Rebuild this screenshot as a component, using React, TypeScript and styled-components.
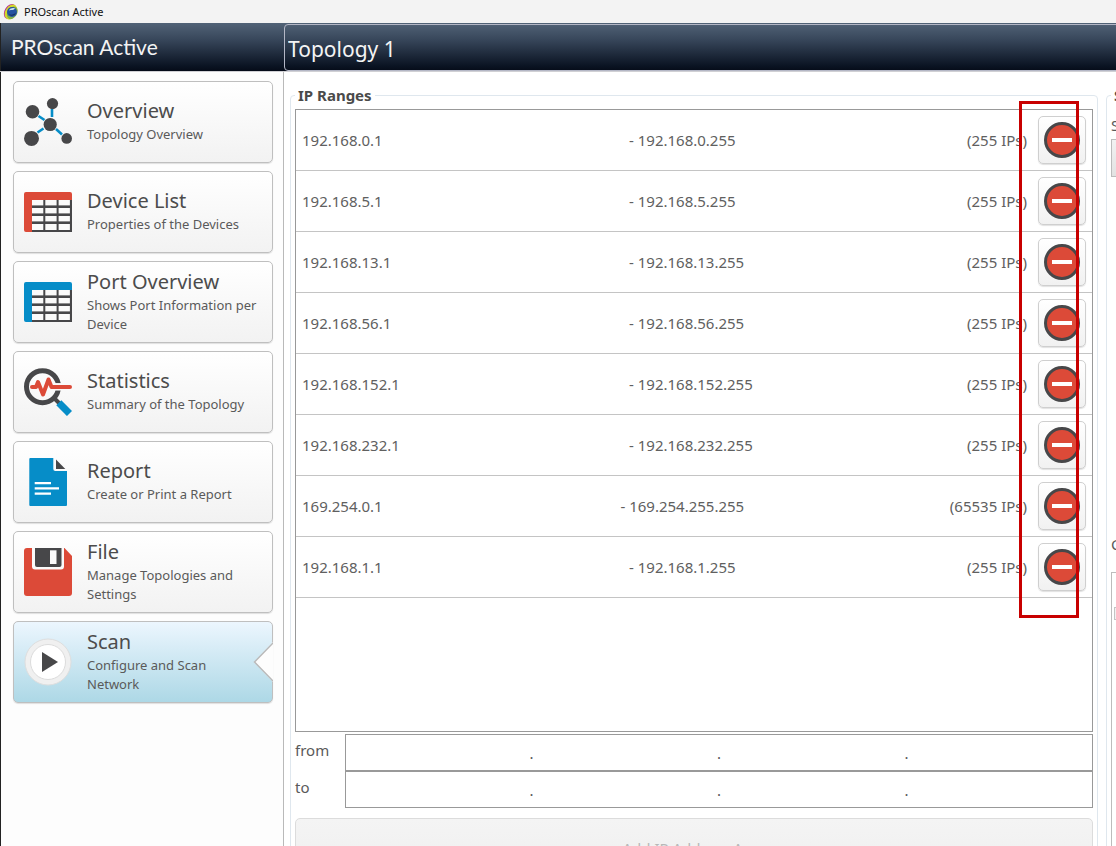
import React from "react";
import styled, { createGlobalStyle, css } from "styled-components";

const DARK = "#474749";
const RED = "#dc4a38";
const BLUE = "#068dc8";

const GlobalStyle = createGlobalStyle`
  * { box-sizing: border-box; }
  html, body { margin: 0; background: #fff; }
  body, button, input {
    font-family: "Noto Sans", "Open Sans", sans-serif;
    color: #555;
  }
`;

const Window = styled.div`
  display: flex;
  flex-direction: column;
  height: 100vh;
  overflow: hidden;
`;

const TitleBar = styled.header`
  display: flex;
  flex: none;
  align-items: center;
  gap: 5px;
  height: 23px;
  padding-left: 3px;
  background: #f3f3f3;
  color: #111;
  font: 11px/16px "Noto Sans", sans-serif;
`;

const HeaderBar = styled.div`
  display: grid;
  flex: none;
  grid-template-columns: 284px minmax(0, 1fr);
  height: 48px;
  border-left: 1px solid #222;
  background: linear-gradient(#526377, #37465a 35%, #0a1322 90%, #050b18);
`;

const AppName = styled.h1`
  margin: 0;
  padding-left: 10px;
  color: #f4f4f4;
  font: 400 21px/48px Lato, sans-serif;
`;

const TopologyName = styled.input`
  width: calc(100% + 8px);
  height: 47px;
  margin-left: -1px;
  margin-top: 1px;
  padding: 2px 4px 0 3px;
  border: 1px solid #b4b7c6;
  border-radius: 4px;
  outline: none;
  background: transparent;
  color: #f4f4f4;
  font-size: 21px;
`;

const Body = styled.div`
  display: grid;
  flex: 1;
  grid-template-columns: 284px minmax(0, 1fr);
  min-height: 0;
  border-top: 1px solid #d0d0d4;
`;

const Sidebar = styled.nav`
  display: flex;
  flex-direction: column;
  gap: 8px;
  padding: 9px 10px 0 12px;
  border-left: 1px solid #222;
  border-right: 1px solid #b9b9b9;
  background: #fdfdfd;
`;

const NavCard = styled.button<{ $active?: boolean }>`
  position: relative;
  display: flex;
  flex: none;
  align-items: center;
  gap: 15px;
  height: 82px;
  padding: 0 14px 0 10px;
  border: 1px solid #bfbfbf;
  border-radius: 5px;
  background: linear-gradient(#fff, #f2f2f2);
  box-shadow: 0 1px 1px rgba(0, 0, 0, 0.12);
  text-align: left;
  ${(p) =>
    p.$active &&
    css`
      background: linear-gradient(#ecf6fe, #add8e6);
    `}
`;

const NavIcon = styled.svg`
  flex: none;
  width: 48px;
  height: 48px;
`;

const NavLabel = styled.span`
  padding-bottom: 3px;
`;

const NavTitle = styled.span`
  display: block;
  color: #4c4c4c;
  font-size: 20px;
  line-height: 28px;
`;

const NavText = styled.span`
  display: block;
  color: #5a5a5a;
  font-size: 13px;
  line-height: 19px;
`;

const Notch = styled.svg`
  position: absolute;
  top: 20px;
  right: -1px;
  width: 20px;
  height: 40px;
`;

const Main = styled.main`
  display: flex;
  gap: 8px;
  min-width: 0;
  padding: 13px 0 0 6px;
  overflow: hidden;
`;

const Group = styled.fieldset`
  flex: 1;
  min-width: 0;
  height: 900px;
  margin: 0;
  padding: 4px 4px 0;
  border: 1px solid #dfe7ee;
  border-radius: 4px;
`;

const SidePane = styled.div`
  flex: 0 0 10px;
  overflow: hidden;

  > fieldset {
    width: 320px;
  }
`;

const Legend = styled.legend`
  padding: 0 3px;
  color: #4a4a4a;
  font-size: 15px;
  font-weight: 700;
  line-height: 20px;
`;

const ListBox = styled.div`
  position: relative;
  height: 623px;
  border: 1px solid #999;
`;

const RangeList = styled.ul`
  margin: 0;
  padding: 0;
  list-style: none;
`;

const RangeRow = styled.li`
  display: grid;
  grid-template-columns: minmax(0, 1fr) minmax(0, 1fr) auto 48px;
  align-items: center;
  height: 61px;
  padding: 0 6px;
  border-bottom: 1px solid #c4c4c4;
  color: #606060;
  font-size: 15px;
  line-height: 20px;
`;

const Count = styled.span`
  margin: 0 11px;
`;

const RemoveButton = styled.button`
  display: grid;
  place-items: center;
  width: 48px;
  height: 48px;
  padding: 0;
  border: 1px solid #cfcfcf;
  border-radius: 5px;
  background: linear-gradient(#fff, #f1f1f1);
  box-shadow: 0 1px 1px rgba(0, 0, 0, 0.12);
`;

const Highlight = styled.div`
  position: absolute;
  top: -9px;
  right: 13px;
  width: 60px;
  height: 517px;
  border: 3px solid #c80000;
  pointer-events: none;
`;

const Addresses = styled.div`
  margin-top: 2px;
`;

const AddressRow = styled.div`
  display: grid;
  grid-template-columns: 50px minmax(0, 1fr);
  height: 37px;
`;

const FieldLabel = styled.label`
  color: #5a5a5a;
  font-size: 15px;
  line-height: 32px;
`;

const AddressBox = styled.div`
  display: grid;
  grid-template-columns: minmax(0, 1fr) auto minmax(0, 1fr) auto minmax(0, 1fr) auto minmax(0, 1fr);
  align-items: center;
  border: 1px solid #999;
  font-size: 15px;
  line-height: 20px;
`;

const Octet = styled.input`
  width: 100%;
  min-width: 0;
  height: 30px;
  padding: 0 4px;
  border: 0;
  outline: none;
  background: transparent;
  font-size: 15px;
  text-align: right;
`;

const AddButton = styled.button`
  display: block;
  width: 100%;
  height: 60px;
  margin-top: 10px;
  border: 1px solid #dcdcdc;
  border-radius: 5px;
  background: linear-gradient(#f4f4f4, #efefef);
  font-size: 15px;

  &:disabled {
    color: #b8b8b8;
  }
`;

const SideLabel = styled.label`
  display: block;
  margin-top: 4px;
  color: #5a5a5a;
  font-size: 15px;
  line-height: 24px;
`;

const SideButton = styled.button`
  display: block;
  width: 100%;
  height: 38px;
  margin-top: 2px;
  margin-bottom: 355px;
  border: 1px solid #bcbcbc;
  background: linear-gradient(#f2f2f2, #e2e2e2);
`;

const SideBox = styled.div`
  height: 320px;
  margin-top: 16px;
  padding: 34px 2px;
  border: 1px solid #bcbcbc;

  > input {
    display: block;
    appearance: none;
    width: 13px;
    height: 13px;
    margin: 0;
    border: 1px solid #c4c4c4;
    background: #f2f2f2;
  }
`;

function OverviewIcon() {
  return (
    <NavIcon viewBox="0 0 48 48" aria-hidden="true">
      <path d="M28 11v8M14.500 18l6 4M13.500 34.500l6-4M32 31l6 5.500" stroke={BLUE} strokeWidth="2.600" fill="none" />
      <g fill={DARK}>
        <circle cx="26.200" cy="26.500" r="6.600" />
        <circle cx="8.500" cy="13.700" r="6.800" />
        <circle cx="28.500" cy="5.600" r="5.600" />
        <circle cx="7.500" cy="40.400" r="7.500" />
        <circle cx="42.700" cy="40.400" r="5.300" />
      </g>
    </NavIcon>
  );
}

function TableIcon({ color }: { color: string }) {
  return (
    <NavIcon viewBox="0 0 48 48" aria-hidden="true">
      <path d="M8 11h40v33H8z" fill={DARK} />
      <path d="M2 4h44a2 2 0 0 1 2 2v6H8v32H2a2 2 0 0 1-2-2V6a2 2 0 0 1 2-2z" fill={color} />
      {[12, 20, 28, 36].map((y) =>
        [8, 21.3, 34.6].map((x) => (
          <rect key={`${x}-${y}`} x={x} y={y} width="11.300" height={y === 36 ? 6 : 5.4} fill="#fafafa" />
        ))
      )}
    </NavIcon>
  );
}

function StatisticsIcon() {
  return (
    <NavIcon viewBox="0 0 48 48" aria-hidden="true">
      <circle cx="18.500" cy="18.700" r="16" fill="none" stroke={DARK} strokeWidth="5" />
      <path d="M29 18.800h19" stroke="#fafafa" strokeWidth="7.500" />
      <path d="M30.500 30.500l5 5" stroke={DARK} strokeWidth="4" />
      <path d="M34.800 34.800l10.700 10.700" stroke={BLUE} strokeWidth="7.200" />
      <path
        d="M8 19h4l2-5 5 12.500 5.500-15L27.500 19H46"
        fill="none"
        stroke={RED}
        strokeWidth="4"
        strokeLinecap="round"
        strokeLinejoin="round"
      />
    </NavIcon>
  );
}

function ReportIcon() {
  return (
    <NavIcon viewBox="0 0 48 48" aria-hidden="true">
      <path d="M6.300 0h23v11a2 2 0 0 0 2 2H43v34a1 1 0 0 1-1 1H6.300a1 1 0 0 1-1-1V1a1 1 0 0 1 1-1z" fill={BLUE} />
      <path d="M32 1.500v9.500h9.300z" fill={DARK} />
      <path d="M10.700 25.200H27M10.700 30.400H35M10.700 35.600H27" stroke="#fff" strokeWidth="2.300" />
    </NavIcon>
  );
}

function FileIcon() {
  return (
    <NavIcon viewBox="0 0 48 48" aria-hidden="true">
      <path d="M3 0h37.500L48 8v37a3 3 0 0 1-3 3H3a3 3 0 0 1-3-3V3a3 3 0 0 1 3-3z" fill={RED} />
      <path d="M8 0h32v18.500a3 3 0 0 1-3 3H11a3 3 0 0 1-3-3z" fill="#fafafa" />
      <path d="M11 0h26.500v17a2 2 0 0 1-2 2H13a2 2 0 0 1-2-2z" fill={DARK} />
      <path d="M26 2.300h6.500v13.700H26z" fill="#fafafa" />
    </NavIcon>
  );
}

function ScanIcon() {
  return (
    <NavIcon viewBox="0 0 48 48" aria-hidden="true">
      <circle cx="24" cy="24" r="23" fill="#f0f0f0" stroke="#dedede" />
      <circle cx="24" cy="24" r="17.500" fill="#fff" stroke="#dcdcdc" />
      <path d="M18 14l16 10-16 10z" fill={DARK} />
    </NavIcon>
  );
}

function AppLogo() {
  return (
    <svg width="16" height="18" viewBox="0 0 16 18" aria-hidden="true">
      <g transform="rotate(32 8 9)">
        <ellipse cx="7" cy="9" rx="5.500" ry="8" fill="#b32a9a" />
        <ellipse cx="8" cy="9" rx="5.600" ry="8" fill="#d3d928" />
        <ellipse cx="9.500" cy="9" rx="4.800" ry="6.800" fill="#7fae4a" />
      </g>
      <circle cx="9" cy="9" r="5" fill="#2453a0" />
      <path d="M6 7.500c1-2.500 4-3 6-2-1 2-3.500 1-6 2z" fill="#c5dff2" />
      <path d="M6 11c2 1.500 5 .5 7-1.500-.5 3-5 5-7 1.500z" fill="#17305f" />
    </svg>
  );
}

const navItems = [
  { title: "Overview", text: "Topology Overview", icon: <OverviewIcon /> },
  { title: "Device List", text: "Properties of the Devices", icon: <TableIcon color={RED} /> },
  { title: "Port Overview", text: "Shows Port Information per Device", icon: <TableIcon color={BLUE} /> },
  { title: "Statistics", text: "Summary of the Topology", icon: <StatisticsIcon /> },
  { title: "Report", text: "Create or Print a Report", icon: <ReportIcon /> },
  { title: "File", text: "Manage Topologies and Settings", icon: <FileIcon /> },
  { title: "Scan", text: "Configure and Scan Network", icon: <ScanIcon />, active: true },
];

const ranges = [
  ["192.168.0.1", "192.168.0.255", 255],
  ["192.168.5.1", "192.168.5.255", 255],
  ["192.168.13.1", "192.168.13.255", 255],
  ["192.168.56.1", "192.168.56.255", 255],
  ["192.168.152.1", "192.168.152.255", 255],
  ["192.168.232.1", "192.168.232.255", 255],
  ["169.254.0.1", "169.254.255.255", 65535],
  ["192.168.1.1", "192.168.1.255", 255],
] as const;

function AddressField({ name }: { name: string }) {
  return (
    <AddressRow>
      <FieldLabel htmlFor={`${name}-0`}>{name}</FieldLabel>
      <AddressBox>
        {[0, 1, 2, 3].map((i) => (
          <React.Fragment key={i}>
            {i > 0 && <span>.</span>}
            <Octet id={`${name}-${i}`} aria-label={`${name} octet ${i + 1}`} maxLength={3} />
          </React.Fragment>
        ))}
      </AddressBox>
    </AddressRow>
  );
}

export default function App() {
  return (
    <Window>
      <GlobalStyle />
      <TitleBar>
        <AppLogo />
        <span>PROscan Active</span>
      </TitleBar>
      <HeaderBar>
        <AppName>PROscan Active</AppName>
        <TopologyName aria-label="Topology name" defaultValue="Topology 1" />
      </HeaderBar>
      <Body>
        <Sidebar>
          {navItems.map((item) => (
            <NavCard key={item.title} type="button" $active={item.active}>
              {item.icon}
              <NavLabel>
                <NavTitle>{item.title}</NavTitle>
                <NavText>{item.text}</NavText>
              </NavLabel>
              {item.active && (
                <Notch viewBox="0 0 20 40" aria-hidden="true">
                  <path d="M20 0L1 20l19 20z" fill="#fdfdfd" />
                  <path d="M20 1L1.500 20 20 39" fill="none" stroke="#b9b9b9" strokeWidth="1.500" />
                </Notch>
              )}
            </NavCard>
          ))}
        </Sidebar>
        <Main>
          <Group>
            <Legend>IP Ranges</Legend>
            <ListBox>
              <RangeList>
                {ranges.map(([from, to, count]) => (
                  <RangeRow key={from}>
                    <span>{from}</span>
                    <span>- {to}</span>
                    <Count>({count} IPs)</Count>
                    <RemoveButton type="button" aria-label={`Remove ${from}`}>
                      <svg width="36" height="36" viewBox="0 0 36 36" aria-hidden="true">
                        <circle cx="18" cy="18" r="16.500" fill={RED} stroke={DARK} strokeWidth="3" />
                        <path d="M8 16h20v4H8z" fill="#fff" />
                      </svg>
                    </RemoveButton>
                  </RangeRow>
                ))}
              </RangeList>
              <Highlight />
            </ListBox>
            <Addresses>
              <AddressField name="from" />
              <AddressField name="to" />
            </Addresses>
            <AddButton type="button" disabled>
              Add IP Address Area
            </AddButton>
          </Group>
          <SidePane>
            <Group>
              <Legend>S</Legend>
              <SideLabel htmlFor="side-action">S</SideLabel>
              <SideButton id="side-action" type="button" />
              <SideLabel htmlFor="side-option">C</SideLabel>
              <SideBox>
                <input id="side-option" type="checkbox" />
              </SideBox>
            </Group>
          </SidePane>
        </Main>
      </Body>
    </Window>
  );
}
